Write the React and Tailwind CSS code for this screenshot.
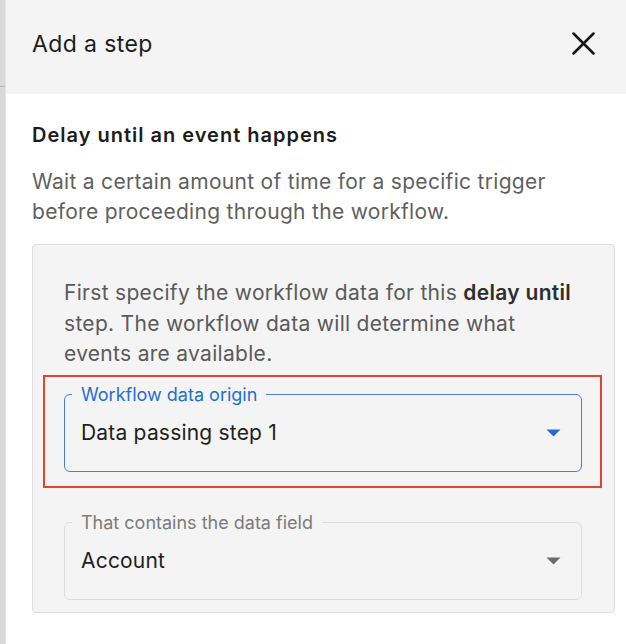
import { useState } from 'react';

function CaretDown({ color }) {
  return (
    <svg width="15" height="8" viewBox="0 0 15 8" className="shrink-0">
      <path d="M0.5 0.5 L14.5 0.5 L7.5 7.5 Z" fill={color} />
    </svg>
  );
}

function SelectField({ label, value, focused }) {
  return (
    <fieldset
      className={
        focused
          ? 'h-[88px] rounded-[6px] border-[1.5px] border-[#4a80d6] pl-[16px] pr-[20px]'
          : 'h-[88px] rounded-[6px] border-[1.5px] border-[#dcdcdc] pl-[16px] pr-[20px]'
      }
    >
      <legend
        className={
          focused
            ? 'ml-[-9px] px-[9px] text-[18px] leading-[22px] text-[#1f6fd1]'
            : 'ml-[-9px] px-[9px] text-[18px] leading-[22px] text-[#7b7b7b]'
        }
      >
        {label}
      </legend>
      <div className="mt-[14px] flex items-center justify-between">
        <span className="text-[21px] leading-[26px] tracking-[0.2px] text-[#1e1e1e]">{value}</span>
        <CaretDown color={focused ? '#1f6fd1' : '#6b6b6b'} />
      </div>
    </fieldset>
  );
}

export default function App() {
  const [open, setOpen] = useState(true);

  return (
    <div className="flex h-[644px] w-[626px] overflow-hidden bg-white font-['Inter',sans-serif]">
      {/* page behind the drawer */}
      <div className="flex w-[6px] shrink-0 flex-col border-r border-[#e4e4e4] bg-[#d9d9d9]">
        <div className="h-[86px]" />
        <div className="h-px bg-[#b9b9b9]" />
      </div>

      {open && (
        <div className="flex flex-1 flex-col">
          <div className="flex h-[94px] shrink-0 items-start justify-between bg-[#f4f4f4] pl-[26px] pr-[31px] pt-[30px]">
            <h2 className="text-[23px] leading-[28px] tracking-[0.4px] text-[#1c1c1c]">Add a step</h2>
            <button className="mt-[2px]" onClick={() => setOpen(false)}>
              <svg width="23" height="23" viewBox="0 0 23 23">
                <path d="M1.5 1.5 L21.5 21.5 M21.5 1.5 L1.5 21.5" stroke="#151515" strokeWidth="2.5" strokeLinecap="round" />
              </svg>
            </button>
          </div>

          <div className="flex flex-col pl-[26px] pr-[11px] pt-[29px]">
            <h3 className="text-[20px] font-semibold leading-[24px] tracking-[1px] text-[#1c1c1c]">
              Delay until an event happens
            </h3>
            <p className="mt-[20px] text-[21px] leading-[30px] tracking-[0.3px] text-[#5f5f5f]">
              Wait a certain amount of time for a specific trigger
              <br />
              before proceeding through the workflow.
            </p>

            <div className="mt-[17px] rounded-[4px] border border-[#dedede] bg-[#f4f4f4] pb-[12px] pl-[31px] pr-[32px] pt-[33px]">
              <p className="text-[21px] leading-[30.5px] tracking-[0.3px] text-[#5a5a5a]">
                First specify the workflow data for this{' '}
                <span className="font-semibold text-[#2e2e2e]">delay until</span>
                <br />
                step. The workflow data will determine what
                <br />
                events are available.
              </p>

              <div className="mt-[5px] ml-[-21px] mr-[-20px] border-2 border-[#e5432d] pb-[14px] pl-[19px] pr-[18px] pt-[7px]">
                <SelectField label="Workflow data origin" value="Data passing step 1" focused />
              </div>

              <div className="mt-[24px]">
                <SelectField label="That contains the data field" value="Account" />
              </div>
            </div>
          </div>
        </div>
      )}
    </div>
  );
}
